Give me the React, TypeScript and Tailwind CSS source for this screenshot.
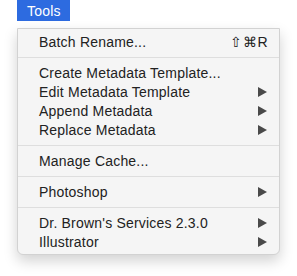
import React from 'react';

type Item =
    | { kind: 'sep' }
    | { kind: 'item'; label: string; shortcut?: string; submenu?: boolean };

const items: Item[] = [
    { kind: 'item', label: 'Batch Rename...', shortcut: '⇧⌘R' },
    { kind: 'sep' },
    { kind: 'item', label: 'Create Metadata Template...' },
    { kind: 'item', label: 'Edit Metadata Template', submenu: true },
    { kind: 'item', label: 'Append Metadata', submenu: true },
    { kind: 'item', label: 'Replace Metadata', submenu: true },
    { kind: 'sep' },
    { kind: 'item', label: 'Manage Cache...' },
    { kind: 'sep' },
    { kind: 'item', label: 'Photoshop', submenu: true },
    { kind: 'sep' },
    { kind: 'item', label: "Dr. Brown's Services 2.3.0", submenu: true },
    { kind: 'item', label: 'Illustrator', submenu: true },
];

const Arrow: React.FC = () => (
    <svg width="9" height="10" viewBox="0 0 9 10" className="block">
        <path d="M0 0 L9 5 L0 10 Z" fill="#4a4a4a" />
    </svg>
);

export default function App() {
    return (
        <div className="w-[297px] h-[276px] bg-white relative font-['Liberation_Sans',Arial,sans-serif] text-[14px] text-[#222]">
            {/* menu bar title */}
            <div className="ml-[17px] w-[53px] h-[21px] bg-[#2d6be0] text-white flex items-center pl-[10px] leading-none tracking-[0.2px]">
                Tools
            </div>

            {/* dropdown */}
            <div className="mt-[7px] ml-[17px] w-[263px] bg-[#f5f5f5] border border-[#d2d2d2] rounded-b-[6px] py-[3px] shadow-[0_6px_14px_rgba(0,0,0,0.18)]">
                {items.map((it, i) =>
                    it.kind === 'sep' ? (
                        <div key={i} className="h-[12px] flex items-center">
                            <div className="w-full h-px bg-[#dedede]" />
                        </div>
                    ) : (
                        <div key={i} className="h-[19px] flex items-center justify-between pl-[21px] pr-[12px] leading-none">
                            <span className="tracking-[0.2px]">{it.label}</span>
                            {it.shortcut && <span className="tracking-[0.5px] -mr-[1px]">{it.shortcut}</span>}
                            {it.submenu && <Arrow />}
                        </div>
                    )
                )}
            </div>
        </div>
    );
}
